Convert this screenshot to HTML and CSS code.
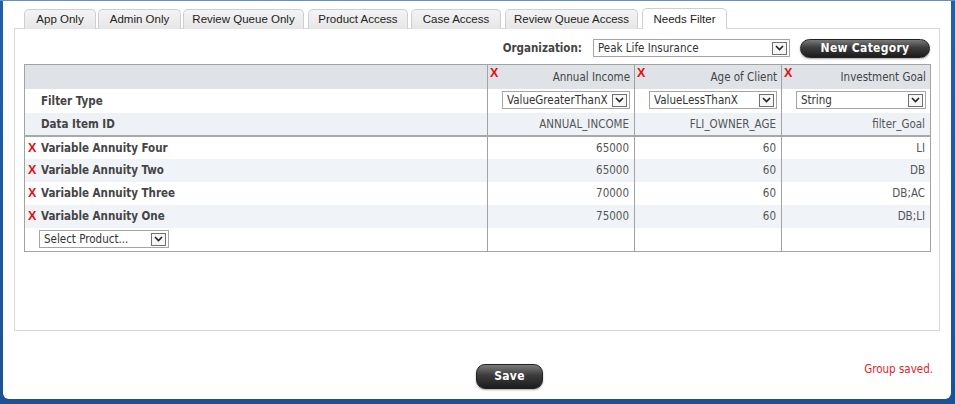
FILE: index.html
```html
<!DOCTYPE html>
<html>
<head>
<meta charset="utf-8">
<link rel="stylesheet" href="styles.css">
</head>
<body>
<div class="frame">
  <div class="tabs">
    <div class="tab t1">App Only</div>
    <div class="tab t2">Admin Only</div>
    <div class="tab t3">Review Queue Only</div>
    <div class="tab t4">Product Access</div>
    <div class="tab t5">Case Access</div>
    <div class="tab t6">Review Queue Access</div>
    <div class="tab t7 active">Needs Filter</div>
  </div>
  <div class="panel">
    <div class="orgrow">
      <span class="orglabel">Organization:</span>
      <div class="sel org"><span class="seltext">Peak Life Insurance</span><span class="arrow"><svg width="9" height="6" viewBox="0 0 9 6"><path d="M1 1 L4.5 4.5 L8 1" fill="none" stroke="#222" stroke-width="1.6"/></svg></span></div>
      <div class="btn newcat">New Category</div>
    </div>
    <table class="grid">
      <colgroup><col class="c1"><col class="c2"><col class="c3"><col class="c4"></colgroup>
      <tr class="hdr">
        <td></td>
        <td><div class="hcell"><span class="x">X</span><span class="htext">Annual Income</span></div></td>
        <td><div class="hcell"><span class="x">X</span><span class="htext">Age of Client</span></div></td>
        <td><div class="hcell"><span class="x">X</span><span class="htext">Investment Goal</span></div></td>
      </tr>
      <tr class="ftype">
        <td class="label">Filter Type</td>
        <td class="selcell"><div class="sel ft"><span class="seltext">ValueGreaterThanX</span><span class="arrow"><svg width="9" height="6" viewBox="0 0 9 6"><path d="M1 1 L4.5 4.5 L8 1" fill="none" stroke="#222" stroke-width="1.6"/></svg></span></div></td>
        <td class="selcell"><div class="sel ft"><span class="seltext">ValueLessThanX</span><span class="arrow"><svg width="9" height="6" viewBox="0 0 9 6"><path d="M1 1 L4.5 4.5 L8 1" fill="none" stroke="#222" stroke-width="1.6"/></svg></span></div></td>
        <td class="selcell"><div class="sel ft"><span class="seltext">String</span><span class="arrow"><svg width="9" height="6" viewBox="0 0 9 6"><path d="M1 1 L4.5 4.5 L8 1" fill="none" stroke="#222" stroke-width="1.6"/></svg></span></div></td>
      </tr>
      <tr class="dataid">
        <td class="label">Data Item ID</td>
        <td class="num">ANNUAL_INCOME</td>
        <td class="num">FLI_OWNER_AGE</td>
        <td class="num">filter_Goal</td>
      </tr>
      <tr class="row first">
        <td class="prod"><span class="rx">X</span>Variable Annuity Four</td>
        <td class="num">65000</td><td class="num">60</td><td class="num">LI</td>
      </tr>
      <tr class="row alt">
        <td class="prod"><span class="rx">X</span>Variable Annuity Two</td>
        <td class="num">65000</td><td class="num">60</td><td class="num">DB</td>
      </tr>
      <tr class="row">
        <td class="prod"><span class="rx">X</span>Variable Annuity Three</td>
        <td class="num">70000</td><td class="num">60</td><td class="num">DB;AC</td>
      </tr>
      <tr class="row alt">
        <td class="prod"><span class="rx">X</span>Variable Annuity One</td>
        <td class="num">75000</td><td class="num">60</td><td class="num">DB;LI</td>
      </tr>
      <tr class="addrow">
        <td><div class="sel prodsel"><span class="seltext">Select Product...</span><span class="arrow"><svg width="9" height="6" viewBox="0 0 9 6"><path d="M1 1 L4.5 4.5 L8 1" fill="none" stroke="#222" stroke-width="1.6"/></svg></span></div></td>
        <td></td><td></td><td></td>
      </tr>
    </table>
  </div>
  <div class="footer">
    <div class="btn save">Save</div>
    <div class="msg">Group saved.</div>
  </div>
</div>
</body>
</html>
```

FILE: styles.css
```css
* { box-sizing: border-box; }
html, body { margin: 0; padding: 0; }
body {
  width: 955px;
  height: 404px;
  overflow: hidden;
  background: linear-gradient(#6a8fb8 0, #6a8fb8 1px, #2160a8 1px, #1b5296 100%);
  font-family: "DejaVu Sans Condensed", "DejaVu Sans", sans-serif;
}
.frame {
  margin: 1px 4px 0 3px;
  height: 398px;
  background: #fff;
  border-radius: 0 0 6px 6px;
  padding: 7px 0 0 11px;
}
.tabs {
  display: flex;
  margin-left: 10px;
  height: 21px;
  align-items: flex-end;
  position: relative;
  z-index: 1;
}
.tab {
  font-family: "Liberation Sans", Arial, sans-serif;
  font-size: 11.5px;
  color: #222;
  height: 20px;
  line-height: 19px;
  text-align: center;
  border: 1px solid #cfcfcf;
  border-bottom: none;
  border-radius: 5px 5px 0 0;
  background: linear-gradient(#f4f4f4, #e6e6e6);
  white-space: nowrap;
}
.t1 { width: 72px; }
.t2 { width: 83px; margin-left: 2px; }
.t3 { width: 121px; margin-left: 2px; }
.t4 { width: 100px; margin-left: 4px; }
.t5 { width: 90px; margin-left: 3px; }
.t6 { width: 133px; margin-left: 4px; }
.t7 { width: 85px; margin-left: 4px; }
.tab.active {
  background: #fff;
  height: 21px;
  line-height: 20px;
}
.panel {
  width: 926px;
  height: 303px;
  border: 1px solid #d8d8d8;
  margin-top: -1px;
  padding: 9px 9px 0 9px;
}
.orgrow {
  display: flex;
  justify-content: flex-end;
  align-items: center;
  height: 20px;
  margin-bottom: 6px;
}
.orglabel {
  font-weight: bold;
  font-size: 11.5px;
  color: #444;
  margin-right: 11px;
}
.sel {
  display: flex;
  align-items: center;
  justify-content: space-between;
  border: 1px solid #a5a5a5;
  background: #fff;
  font-size: 11.5px;
  color: #333;
  padding: 0 2px 0 4px;
  height: 18px;
}
.sel .seltext { white-space: nowrap; overflow: hidden; }
.sel .arrow {
  width: 15px;
  height: 13px;
  border: 1px solid #707070;
  background: #f6f6f6;
  display: flex;
  align-items: center;
  justify-content: center;
  flex: none;
}
.sel.org { width: 197px; margin-right: 10px; }
.btn {
  color: #fff;
  font-weight: bold;
  font-size: 12px;
  text-align: center;
  border-radius: 10px;
  background: linear-gradient(#7a7a7a 0%, #3c3c3c 45%, #1c1c1c 100%);
  border: 1px solid #222;
  box-shadow: 0 1px 2px rgba(0,0,0,0.35);
  letter-spacing: 0.3px;
}
.newcat { width: 130px; height: 19px; line-height: 17px; }
table.grid {
  width: 906px;
  border-collapse: collapse;
  table-layout: fixed;
  border: 1px solid #a2a2a2;
  font-size: 11.5px;
}
col.c1 { width: 463px; }
col.c2 { width: 147px; }
col.c3 { width: 147px; }
col.c4 { width: 149px; }
table.grid td {
  padding: 0;
  border-left: 1px solid #a2a2a2;
  vertical-align: middle;
}
table.grid td:first-child { border-left: none; }
tr.hdr { background: #dfe3e8; height: 24px; }
tr.hdr td { vertical-align: top; }
.hcell {
  display: flex;
  justify-content: space-between;
  align-items: flex-start;
  height: 23px;
  padding: 2px 4px 0 2px;
}
.hcell .htext {
  color: #444;
  margin-top: 3px;
}
.x, .rx {
  font-family: "Liberation Sans", Arial, sans-serif;
  font-weight: bold;
  color: #e01010;
  font-size: 12.5px;
  line-height: 12px;
}
tr.ftype { height: 24px; background: #fff; }
tr.dataid { height: 23px; background: #eef2f7; border-bottom: 2px solid #a8a8a8; }
.label {
  font-weight: bold;
  color: #444;
  padding-left: 16px !important;
}
.selcell { padding: 0 4px 1px 14px !important; }
.sel.ft { height: 18px; margin-left: auto; }
td.num {
  text-align: right;
  color: #555;
  padding-right: 5px !important;
}
tr.row { height: 23px; background: #fff; }
tr.row.alt { background: #f0f4f9; }
td.prod {
  font-weight: bold;
  color: #444;
  padding-left: 2px !important;
}
td.prod .rx { display: inline-block; width: 14px; padding-left: 1px; }
tr.addrow { height: 24px; background: #fff; }
.sel.prodsel { width: 130px; margin-left: 14px; height: 18px; }
.footer {
  display: flex;
  align-items: flex-start;
  padding-top: 33px;
}
.save {
  width: 67px;
  height: 25px;
  line-height: 23px;
  margin-left: 462px;
  border-radius: 9px;
}
.msg {
  margin-left: auto;
  margin-right: 18px;
  margin-top: -2px;
  color: #e0232a;
  font-size: 11.5px;
}
```
